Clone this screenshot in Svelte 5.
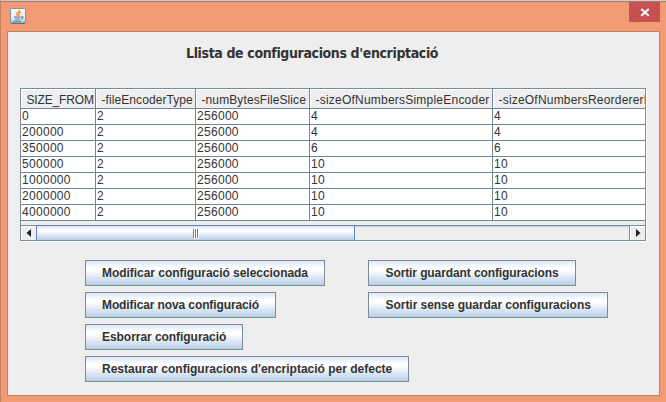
<script>
  const columns = [
    { name: 'SIZE_FROM', width: 75, spacing: -0.15 },
    { name: '-fileEncoderType', width: 100, spacing: 0.08 },
    { name: '-numBytesFileSlice', width: 114, spacing: 0.1 },
    { name: '-sizeOfNumbersSimpleEncoder', width: 183, spacing: 0.22 },
    { name: '-sizeOfNumbersReordererEncoder', width: 153, spacing: 0.2 }
  ];
  const rows = [
    ['0', '2', '256000', '4', '4'],
    ['200000', '2', '256000', '4', '4'],
    ['350000', '2', '256000', '6', '6'],
    ['500000', '2', '256000', '10', '10'],
    ['1000000', '2', '256000', '10', '10'],
    ['2000000', '2', '256000', '10', '10'],
    ['4000000', '2', '256000', '10', '10']
  ];
  const editActions = [
    { label: 'Modificar configuració seleccionada', width: 240, spacing: -0.04 },
    { label: 'Modificar nova configuració', width: 191, spacing: -0.11 },
    { label: 'Esborrar configuració', width: 158, spacing: -0.05 },
    { label: "Restaurar configuracions d'encriptació per defecte", width: 324, spacing: 0 }
  ];
  const exitActions = [
    { label: 'Sortir guardant configuracions', width: 208, spacing: -0.1 },
    { label: 'Sortir sense guardar configuracions', width: 240, spacing: -0.04 }
  ];
</script>

{#snippet action(item)}
  <button style="width:{item.width}px"><span style="letter-spacing:{item.spacing}px">{item.label}</span></button>
{/snippet}

<div class="window">
  <header>
    <svg class="java" width="16" height="16" viewBox="0 0 16 16">
      <defs>
        <linearGradient id="tile" x1="0" y1="0" x2="0" y2="1">
          <stop offset="0" stop-color="#f7f7f6" />
          <stop offset="0.65" stop-color="#e9ecee" />
          <stop offset="1" stop-color="#9eb4c5" />
        </linearGradient>
      </defs>
      <rect x="0.5" y="0.5" width="15" height="15" rx="1.2" fill="url(#tile)" stroke="#8296a3" />
      <path d="M1 15.3h14" stroke="#456783" />
      <path d="M9.8 2C10 4 5.8 4.5 6.6 6.3L7.8 8M10.8 4.3C8.6 5 8 5.8 9 6.8L8.7 8" fill="none" stroke="#ec8b32" stroke-width="1.3" />
      <path d="M4 9h6.5M5 11h5M3.5 13.3h7.5M11 9c3-1 2.5 1.8 0 2" fill="none" stroke="#56748f" stroke-width="1.1" />
    </svg>
    <div class="close">
      <svg width="31" height="20" viewBox="0 0 31 20">
        <path d="M12.3 7l7.4 6.8M19.7 7l-7.4 6.8" stroke="#fff" stroke-width="2" />
      </svg>
    </div>
  </header>
  <main>
    <h1>Llista de configuracions d'encriptació</h1>
    <section class="pane">
      <div class="row head">
        {#each columns as col}
          <div class="cell" style="width:{col.width}px;letter-spacing:{col.spacing}px">{col.name}</div>
        {/each}
      </div>
      {#each rows as row}
        <div class="row">
          {#each row as value, i}
            <div class="cell" style="width:{columns[i].width}px">{value}</div>
          {/each}
        </div>
      {/each}
      <div class="scrollbar">
        <div class="arrow left"><svg width="15" height="14"><path d="M10 3v8L5.5 7z" fill="#222" /></svg></div>
        <div class="thumb"><i></i><i></i><i></i></div>
        <div class="track"></div>
        <div class="arrow right"><svg width="15" height="14"><path d="M6 3v8l4.5-4z" fill="#222" /></svg></div>
      </div>
    </section>
    <section class="actions">
      <div class="group first">{#each editActions as item}{@render action(item)}{/each}</div>
      <div class="group exit">{#each exitActions as item}{@render action(item)}{/each}</div>
    </section>
  </main>
</div>

<style>
  .window {
    box-sizing: border-box;
    width: 666px;
    height: 402px;
    overflow: hidden;
    background: #f19a73;
    border-top: 1px solid #cfcbc8;
    border-left: 1px solid #c4805f;
    box-shadow: inset 0 1px #a97e6a;
    font-family: "Liberation Sans", Arial, sans-serif;
    font-size: 12px;
    color: #333;
  }
  header { display: flex; justify-content: space-between; height: 30px; padding: 0 6px 0 9px; }
  .java { margin-top: 7px; }
  .close { width: 31px; height: 20px; margin-top: 1px; background: #c75050; }
  svg { display: block; }
  main {
    box-sizing: border-box;
    width: 653px;
    height: 365px;
    margin-left: 6px;
    background: #eee;
    border: 1px solid #c17f61;
  }
  h1 {
    height: 20px;
    margin: 11px 0 0 178px;
    font: bold 14px/20px "DejaVu Sans Condensed", "DejaVu Sans", sans-serif;
    font-stretch: condensed;
    letter-spacing: -0.37px;
    white-space: nowrap;
  }
  .pane {
    box-sizing: border-box;
    width: 626px;
    height: 153px;
    margin: 25px 0 0 12px;
    border: 1px solid #7a8a99;
    border-bottom: 0;
    display: flex;
    flex-direction: column;
    box-shadow: 1px 1px #fff;
  }
  .row { display: flex; width: 624px; height: 16px; overflow: hidden; background: #fff; }
  .cell {
    box-sizing: border-box;
    flex: none;
    height: 100%;
    padding-left: 1px;
    line-height: 15px;
    border-right: 1px solid #748598;
    border-bottom: 1px solid #748598;
    white-space: nowrap;
    overflow: hidden;
    letter-spacing: 0.3px;
  }
  .row .cell:last-child { border-right: 0; }
  .head { height: 20px; background: #eee; }
  .head .cell { padding-left: 5.5px; line-height: 22px; box-shadow: inset 1px 1px #fff; }
  .scrollbar {
    box-sizing: border-box;
    display: flex;
    width: 624px;
    height: 16px;
    margin-top: auto;
    border-top: 1px solid #7a8a99;
    border-bottom: 1px solid #7a8a99;
  }
  .arrow { box-sizing: border-box; width: 15px; height: 14px; box-shadow: inset 1px 1px #fff; }
  .right { width: 16px; border-left: 1px solid #7a8a99; }
  .thumb {
    box-sizing: border-box;
    display: flex;
    justify-content: center;
    align-items: center;
    gap: 1px;
    width: 319px;
    height: 15px;
    margin-top: -1px;
    border: 1px solid #6382bf;
    border-bottom: 0;
    background: linear-gradient(#d5e4f1, #fff 28%, #fff 35%, #b8cfe5);
  }
  .thumb i { width: 1px; height: 9px; background: #6382bf; box-shadow: 1px 1px #fff; }
  .track { flex: 1; box-shadow: inset 0 1px #b8cfe5; }
  .actions { display: flex; margin: 19px 0 0 77px; }
  .group { display: flex; flex-direction: column; align-items: flex-start; gap: 6px; }
  .first { width: 283px; flex: none; }
  button {
    box-sizing: border-box;
    flex: none;
    height: 26px;
    padding: 0 0 0 16px;
    border: 1px solid #7a8a99;
    border-radius: 0;
    background: linear-gradient(#dde8f3, #fff 30%, #fff 38%, #b8cfe5);
    color: #333;
    font: bold 12px/24px "Liberation Sans", Arial, sans-serif;
    text-align: left;
    white-space: nowrap;
  }
  .exit button { padding-left: 16.5px; }
</style>
